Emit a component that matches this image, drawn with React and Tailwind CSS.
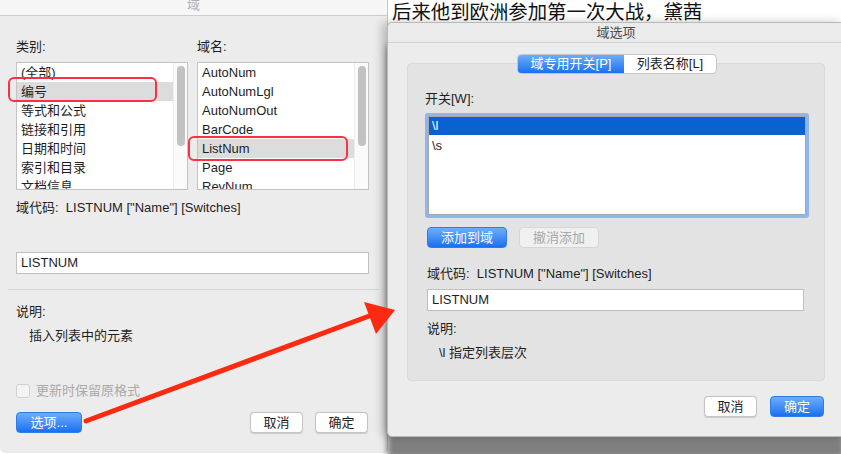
import React from 'react';

const font = { fontFamily: '"Liberation Sans", "Noto Sans CJK SC", sans-serif' };

const leftItems = ['(全部)', '编号', '等式和公式', '链接和引用', '日期和时间', '索引和目录', '文档信息'];
const rightItems = ['AutoNum', 'AutoNumLgl', 'AutoNumOut', 'BarCode', 'ListNum', 'Page', 'RevNum'];

const ListBox = ({ items, selected, className }) => (
    <div className={`flex h-[128px] border border-[#c3c3c3] bg-white overflow-hidden ${className}`}>
        <div className="flex-1 flex flex-col">
            {items.map((item, i) => (
                <div
                    key={i}
                    className={`h-[19px] shrink-0 pl-[4px] leading-[19px] text-[13px] text-[#1e1e1e] ${i === selected ? 'bg-[#dcdcdc]' : ''}`}
                >
                    {item}
                </div>
            ))}
        </div>
        <div className="w-[14px] shrink-0 bg-[#fafafa] border-l border-[#ececec] pt-[3px] flex justify-center">
            <div className="w-[8px] h-[80px] rounded-full bg-[#c2c2c2]" />
        </div>
    </div>
);

const BlueButton = ({ children, className }) => (
    <div className={`h-[21px] rounded-[4px] bg-gradient-to-b from-[#6cadfb] to-[#1670f0] border border-[#2f7be8] text-white text-[13px] leading-[19px] text-center ${className}`}>
        {children}
    </div>
);

const WhiteButton = ({ children, className }) => (
    <div className={`h-[21px] rounded-[4px] bg-white border border-[#c4c4c4] text-[#1e1e1e] text-[13px] leading-[19px] text-center shadow-[0_0.5px_1px_rgba(0,0,0,0.15)] ${className}`}>
        {children}
    </div>
);

const App = () => {
    return (
        <div className="relative w-[841px] h-[454px] overflow-hidden bg-white" style={font}>
            {/* document text behind the dialogs */}
            <div className="absolute left-[388px] top-0 pl-[4px] text-[19.4px] leading-[22px] text-[#111]" style={{ fontFamily: '"Noto Sans CJK SC", sans-serif' }}>
                后来他到欧洲参加第一次大战，黛茜
            </div>

            {/* left dialog: 域 */}
            <div className="absolute left-0 top-0 w-[388px] h-[453px] bg-[#ececec] rounded-b-[5px] border-r border-[#c9c9c9] flex flex-col">
                <div className="h-[16px] shrink-0 bg-[#f6f6f6] border-b border-[#cdcdcd] flex justify-center overflow-hidden">
                    <span className="text-[13px] leading-[13px] text-[#b2b2b2] -mt-[2px]">域</span>
                </div>
                <div className="px-4 flex flex-col">
                    <div className="flex gap-[9px] mt-[22px] h-[18px] text-[13px] text-[#1e1e1e] leading-[18px]">
                        <div className="w-[172px]">类别:</div>
                        <div className="w-[172px]">域名:</div>
                    </div>
                    <div className="flex gap-[9px] mt-[6px]">
                        <ListBox items={leftItems} selected={1} className="w-[172px]" />
                        <ListBox items={rightItems} selected={4} className="w-[172px]" />
                    </div>
                    <div className="mt-[10px] h-[16px] text-[13px] leading-[16px] text-[#1e1e1e]">
                        域代码:&nbsp; LISTNUM ["Name"] [Switches]
                    </div>
                    <div className="mt-[36px] w-[353px] h-[22px] bg-white border border-[#c0c0c0] pl-[4px] text-[13px] leading-[20px] text-[#1e1e1e]">
                        LISTNUM
                    </div>
                </div>
                <div className="mx-[8px] mt-[15px] border-t border-[#d4d4d4]" />
                <div className="px-4 flex flex-col">
                    <div className="mt-[14px] h-[16px] text-[13px] leading-[16px] text-[#1e1e1e]">说明:</div>
                    <div className="mt-[8px] pl-[13px] h-[16px] text-[13px] leading-[16px] text-[#1e1e1e]">插入列表中的元素</div>
                    <div className="mt-[40px] flex items-center gap-[6px] h-[14px]">
                        <div className="w-[14px] h-[14px] rounded-[3px] border border-[#d0d0d0] bg-[#f4f4f4]" />
                        <span className="text-[13px] leading-[14px] text-[#a9a9a9]">更新时保留原格式</span>
                    </div>
                    <div className="mt-[14px] flex items-center">
                        <BlueButton className="w-[66px]">选项...</BlueButton>
                        <div className="flex-1" />
                        <WhiteButton className="w-[53px]">取消</WhiteButton>
                        <WhiteButton className="w-[53px] ml-[12px] mr-[3px]">确定</WhiteButton>
                    </div>
                </div>
            </div>

            {/* right dialog: 域选项 */}
            <div className="absolute left-[387px] top-[22px] w-[458px] h-[415px] bg-[#ececec] rounded-[5px] border border-[#b9b9b9] shadow-[0_22px_6px_0_rgba(0,0,0,0.5),-5px_0_10px_rgba(0,0,0,0.22)] flex flex-col">
                <div className="h-[20px] shrink-0 bg-[#ebebeb] border-b border-[#d2d2d2] flex justify-center items-center rounded-t-[5px]">
                    <span className="text-[13px] text-[#4a4a4a] leading-[20px]">域选项</span>
                </div>
                <div className="ml-[19px] w-[418px] mt-[20px] h-[318px] bg-[#e3e3e3] rounded-[4px] border border-[#dadada] flex flex-col">
                    <div className="flex justify-center -mt-[10px] ml-[2px]">
                        <div className="flex h-[20px] rounded-[4px] border border-[#c6c6c6] bg-white overflow-hidden text-[13px] leading-[18px]">
                            <div className="w-[106px] text-center text-white bg-gradient-to-b from-[#6cadfb] to-[#1670f0]">域专用开关[P]</div>
                            <div className="w-[92px] text-center text-[#1e1e1e]">列表名称[L]</div>
                        </div>
                    </div>
                    <div className="pl-[17px] flex flex-col">
                        <div className="mt-[17px] h-[16px] text-[13px] leading-[16px] text-[#1e1e1e]">开关[W]:</div>
                        <div className="mt-[6px] w-[384px] h-[105px] rounded-[3px] border-[3px] border-[#8db5ee] bg-white">
                            <div className="h-full border border-[#a8a8a8] flex flex-col">
                                <div className="h-[18px] bg-[#0a62d0] text-white text-[13px] leading-[18px] pl-[3px]">\l</div>
                                <div className="h-[18px] text-[#1e1e1e] text-[13px] leading-[18px] pl-[3px] mt-[2px]">\s</div>
                            </div>
                        </div>
                        <div className="flex gap-[12px] mt-[9px] ml-[2px]">
                            <BlueButton className="w-[80px]">添加到域</BlueButton>
                            <div className="w-[80px] h-[21px] rounded-[4px] bg-[#f0f0f0] border border-[#d6d6d6] text-[#a9a9a9] text-[13px] leading-[19px] text-center">撤消添加</div>
                        </div>
                        <div className="mt-[18px] ml-[2px] h-[16px] text-[13px] leading-[16px] text-[#1e1e1e]">
                            域代码:&nbsp; LISTNUM ["Name"] [Switches]
                        </div>
                        <div className="mt-[7px] ml-[2px] w-[377px] h-[22px] bg-white border border-[#c0c0c0] pl-[4px] text-[13px] leading-[20px] text-[#1e1e1e]">
                            LISTNUM
                        </div>
                        <div className="mt-[10px] ml-[2px] h-[16px] text-[13px] leading-[16px] text-[#1e1e1e]">说明:</div>
                        <div className="mt-[8px] ml-[14px] h-[16px] text-[13px] leading-[16px] text-[#1e1e1e]">\l 指定列表层次</div>
                    </div>
                </div>
                <div className="flex mt-[15px] ml-[316px] gap-[13px]">
                    <WhiteButton className="w-[53px]">取消</WhiteButton>
                    <BlueButton className="w-[54px]">确定</BlueButton>
                </div>
            </div>

            {/* red annotations */}
            <div className="absolute left-[8px] top-[77px] w-[149px] h-[25px] border-2 border-[#fb2f45] rounded-[6px]" />
            <div className="absolute left-[188px] top-[136px] w-[160px] h-[25px] border-2 border-[#fb2f45] rounded-[6px]" />
            <svg className="absolute left-0 top-0" width="841" height="454" viewBox="0 0 841 454">
                <line x1="86" y1="421" x2="372" y2="315" stroke="#fb2a10" strokeWidth="5" strokeLinecap="round" />
                <polygon points="395,310 364,302 376,334" fill="#fb2a10" />
            </svg>
        </div>
    );
};

export default App;
